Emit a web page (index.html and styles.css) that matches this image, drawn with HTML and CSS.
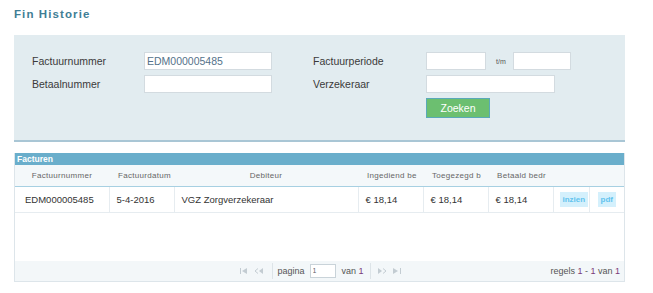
FILE: index.html
```html
<!DOCTYPE html>
<html lang="nl">
<head>
<meta charset="utf-8">
<title>Fin Historie</title>
<link rel="stylesheet" href="styles.css">
</head>
<body>
<div class="page">
  <h1 class="title">Fin Historie</h1>

  <form class="filter">
    <div class="filter-grid">
      <label class="lbl">Factuurnummer</label>
      <input class="inp inp-wide" type="text" value="EDM000005485">
      <span></span>
      <label class="lbl">Factuurperiode</label>
      <div class="period">
        <input class="inp inp-date" type="text">
        <span class="tm">t/m</span>
        <input class="inp inp-date2" type="text">
      </div>

      <label class="lbl">Betaalnummer</label>
      <input class="inp inp-wide" type="text">
      <span></span>
      <label class="lbl">Verzekeraar</label>
      <div><input class="inp inp-verz" type="text"></div>

      <span></span><span></span><span></span><span></span>
      <div><button class="btn-zoek" type="button">Zoeken</button></div>
    </div>
  </form>

  <div class="grid">
    <div class="caption">Facturen</div>
    <table class="tbl">
      <colgroup>
        <col class="c1"><col class="c2"><col class="c3"><col class="c4"><col class="c5"><col class="c6"><col class="c7"><col class="c8">
      </colgroup>
      <thead>
        <tr class="hrow">
          <th class="center">Factuurnummer</th>
          <th>Factuurdatum</th>
          <th class="center">Debiteur</th>
          <th>Ingediend be</th>
          <th>Toegezegd b</th>
          <th>Betaald bedr</th>
          <th></th>
          <th></th>
        </tr>
      </thead>
      <tbody>
        <tr class="drow">
          <td class="first">EDM000005485</td>
          <td>5-4-2016</td>
          <td>VGZ Zorgverzekeraar</td>
          <td>€ 18,14</td>
          <td>€ 18,14</td>
          <td>€ 18,14</td>
          <td class="btncell"><span class="mini">inzien</span></td>
          <td class="btncell b2"><span class="mini">pdf</span></td>
        </tr>
      </tbody>
    </table>
    <div class="empty"></div>
    <div class="pager">
      <div class="pager-side"></div>
      <div class="pager-center">
        <svg class="pico" width="8" height="6" viewBox="0 0 8 6"><rect x="0" y="0" width="1" height="6" fill="#c3ccd2"/><path d="M7 0 L2 3 L7 6 Z" fill="#c3ccd2"/></svg>
        <svg class="pico" width="9" height="6" viewBox="0 0 9 6"><path d="M4 0.5 L1 3 L4 5.5" fill="none" stroke="#c3ccd2" stroke-width="1"/><path d="M9 0 L5 3 L9 6 Z" fill="#c3ccd2"/></svg>
        <span class="psep"></span>
        <span class="ptxt">pagina</span>
        <input class="pinp" type="text" value="1">
        <span class="ptxt">van <span class="num">1</span></span>
        <span class="psep"></span>
        <svg class="pico" width="9" height="6" viewBox="0 0 9 6"><path d="M0 0 L4 3 L0 6 Z" fill="#c3ccd2"/><path d="M5 0.5 L8 3 L5 5.5" fill="none" stroke="#c3ccd2" stroke-width="1"/></svg>
        <svg class="pico" width="8" height="6" viewBox="0 0 8 6"><path d="M0 0 L5 3 L0 6 Z" fill="#c3ccd2"/><rect x="7" y="0" width="1" height="6" fill="#c3ccd2"/></svg>
      </div>
      <div class="pager-side right">regels <span class="num">1</span> - <span class="num">1</span> van <span class="num">1</span></div>
    </div>
  </div>
</div>
</body>
</html>
```
FILE: styles.css
```css
* { box-sizing: border-box; }
body {
  margin: 0;
  background: #ffffff;
  font-family: "Liberation Sans", Arial, sans-serif;
  color: #333;
}
.page {
  padding: 0 28px 0 14px;
}
.title {
  margin: 0;
  height: 35px;
  padding-top: 8px;
  font-size: 11.5px;
  line-height: 13px;
  font-weight: bold;
  letter-spacing: 1.1px;
  color: #3f7e95;
}
.filter {
  background: #e2ecf0;
  border-bottom: 2px solid #a9c6d5;
  padding: 17px 0 22px 18px;
}
.filter-grid {
  display: grid;
  grid-template-columns: 112px 128px 41px 113px auto;
  grid-auto-rows: auto;
  row-gap: 5px;
  align-items: center;
}
.lbl {
  font-size: 10.5px;
  color: #3a3a3a;
}
.inp {
  height: 18px;
  border: 1px solid #d3dbe0;
  background: #fff;
  font-family: "Liberation Sans", Arial, sans-serif;
  font-size: 10.5px;
  color: #55728a;
  padding: 0 2px;
  margin: 0;
  display: block;
}
.inp-wide { width: 128px; }
.inp-date { width: 60px; }
.inp-date2 { width: 58px; }
.inp-verz { width: 129px; }
.period {
  display: flex;
  align-items: center;
}
.tm {
  font-size: 7px;
  color: #555;
  margin: 0 6px 0 10px;
  width: 11px;
}
.btn-zoek {
  display: block;
  width: 64px;
  height: 20px;
  margin: 0;
  padding: 0;
  background: #6cbf70;
  border: 1px solid #5aa9b8;
  color: #fff;
  font-family: "Liberation Sans", Arial, sans-serif;
  font-size: 10.5px;
}
.grid {
  margin-top: 11px;
  border: 1px solid #dde5ea;
  border-top: 0;
}
.caption {
  background: #6aaecb;
  color: #fff;
  font-weight: bold;
  font-size: 8.5px;
  height: 12px;
  line-height: 12px;
  padding-left: 2px;
}
.tbl {
  width: 100%;
  table-layout: fixed;
  border-collapse: collapse;
}
.c1 { width: 94px; }
.c2 { width: 65px; }
.c3 { width: 184px; }
.c4 { width: 65px; }
.c5 { width: 65px; }
.c6 { width: 65px; }
.c7 { width: 36px; }
.c8 { width: auto; }
.hrow th {
  height: 21px;
  background: #f4f8fa;
  border-bottom: 1px solid #a7d0e2;
  font-weight: normal;
  font-size: 8px;
  letter-spacing: 0.3px;
  color: #666;
  text-align: left;
  padding: 0 0 0 9px;
  white-space: nowrap;
}
.hrow th.center { text-align: center; padding: 0; }
.drow td {
  height: 26px;
  font-size: 9.5px;
  color: #333;
  padding: 0 2px 0 7px;
  white-space: nowrap;
  border-right: 1px solid #e6ecf0;
  border-bottom: 1px solid #e6ecf0;
}
.drow td.first { padding-left: 10px; }
.drow td:last-child { border-right: 0; }
.drow td.btncell { padding: 0 0 0 6px; }
.drow td.btncell.b2 { padding-left: 8px; }
.mini {
  display: inline-block;
  height: 15px;
  line-height: 15px;
  padding: 0 3px;
  background: #d4f0fc;
  color: #62c3ee;
  font-size: 8px;
  font-weight: bold;
}
.empty {
  height: 48px;
}
.pager {
  height: 20px;
  background: #f3f7f9;
  display: flex;
  align-items: center;
}
.pager-side {
  flex: 1;
  font-size: 9px;
  color: #555;
}
.pager-side.right {
  text-align: right;
  padding-right: 4px;
}
.pager-center {
  display: flex;
  align-items: center;
  padding-left: 6px;
}
.pico { display: block; margin: 0 3px; }
.psep {
  width: 1px;
  height: 16px;
  background: #dde4e8;
  margin: 0 4px 0 6px;
}
.ptxt {
  font-size: 9px;
  color: #555;
}
.num { color: #7a3b7a; }
.pinp {
  width: 26px;
  height: 14px;
  margin: 0 6px 0 5px;
  border: 1px solid #c9d3d9;
  background: #fff;
  font-family: "Liberation Sans", Arial, sans-serif;
  font-size: 7px;
  padding: 0 2px;
  color: #666;
}
```
